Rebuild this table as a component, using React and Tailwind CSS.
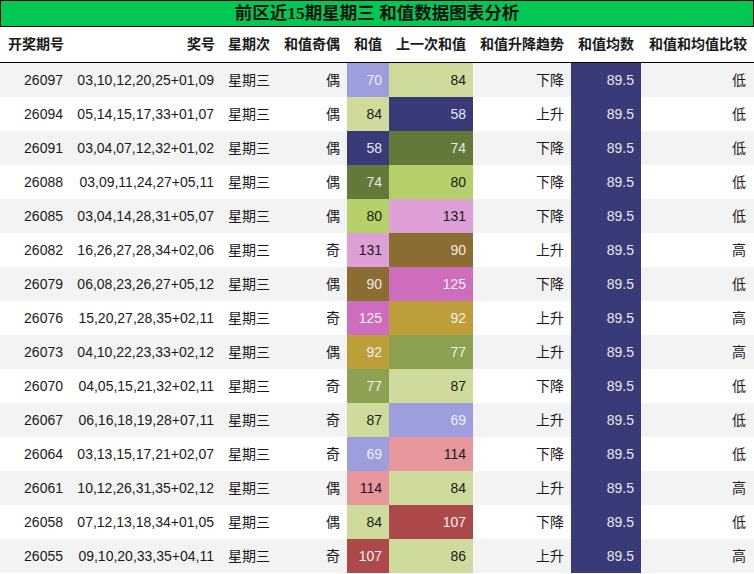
import React from "react";

const rows = [
  ["26097", "03,10,12,20,25+01,09", "偶", 70, 84, "下降", "低"],
  ["26094", "05,14,15,17,33+01,07", "偶", 84, 58, "上升", "低"],
  ["26091", "03,04,07,12,32+01,02", "偶", 58, 74, "下降", "低"],
  ["26088", "03,09,11,24,27+05,11", "偶", 74, 80, "下降", "低"],
  ["26085", "03,04,14,28,31+05,07", "偶", 80, 131, "下降", "低"],
  ["26082", "16,26,27,28,34+02,06", "奇", 131, 90, "上升", "高"],
  ["26079", "06,08,23,26,27+05,12", "偶", 90, 125, "下降", "低"],
  ["26076", "15,20,27,28,35+02,11", "奇", 125, 92, "上升", "高"],
  ["26073", "04,10,22,23,33+02,12", "偶", 92, 77, "上升", "高"],
  ["26070", "04,05,15,21,32+02,11", "奇", 77, 87, "下降", "低"],
  ["26067", "06,16,18,19,28+07,11", "奇", 87, 69, "上升", "低"],
  ["26064", "03,13,15,17,21+02,07", "奇", 69, 114, "下降", "低"],
  ["26061", "10,12,26,31,35+02,12", "偶", 114, 84, "上升", "高"],
  ["26058", "07,12,13,18,34+01,05", "偶", 84, 107, "下降", "低"],
  ["26055", "09,10,20,33,35+04,11", "奇", 107, 86, "上升", "高"],
];

const colorMap = {
  70: ["bg-[#9c9ede]", "text-[#f0f0f0]"],
  84: ["bg-[#cedb9c]", "text-[#1a1a1a]"],
  58: ["bg-[#393b79]", "text-[#e8e8e8]"],
  74: ["bg-[#637939]", "text-[#e8e8e8]"],
  80: ["bg-[#b5cf6b]", "text-[#1a1a1a]"],
  131: ["bg-[#de9ed6]", "text-[#1a1a1a]"],
  90: ["bg-[#8c6d31]", "text-[#e8e8e8]"],
  125: ["bg-[#ce6dbd]", "text-[#f0f0f0]"],
  92: ["bg-[#bd9e39]", "text-[#f0f0f0]"],
  77: ["bg-[#8ca252]", "text-[#f0f0f0]"],
  87: ["bg-[#cedb9c]", "text-[#1a1a1a]"],
  69: ["bg-[#9c9ede]", "text-[#f0f0f0]"],
  114: ["bg-[#e7969c]", "text-[#1a1a1a]"],
  107: ["bg-[#ad494a]", "text-[#f0f0f0]"],
  86: ["bg-[#cedb9c]", "text-[#1a1a1a]"],
};

const grid =
  "grid grid-cols-[71px_151px_55px_70px_42px_84px_98px_70px_113px]";

const headers = [
  "开奖期号",
  "奖号",
  "星期次",
  "和值奇偶",
  "和值",
  "上一次和值",
  "和值升降趋势",
  "和值均数",
  "和值和均值比较",
];

export default function App() {
  return (
    <div
      className="w-[754px] h-[574px] bg-white overflow-hidden text-[14px] text-[#1a1a1a]"
      style={{ fontFamily: '"Liberation Sans", "Noto Sans CJK SC", sans-serif' }}
    >
      <div
        className="h-[27px] bg-[#00c853] border border-black flex items-center justify-center font-bold text-[17.5px] text-[#111]"
        style={{ fontFamily: '"Liberation Serif", "Noto Sans CJK SC", serif' }}
      >
        前区近15期星期三 和值数据图表分析
      </div>
      <div className={`${grid} h-[36px] border-b border-black font-bold`}>
        {headers.map((h, i) => (
          <div
            key={i}
            className={`flex items-center ${i === 0 ? "justify-start pl-[8px]" : "justify-end pr-[7px]"}`}
          >
            {h}
          </div>
        ))}
      </div>
      {rows.map((r, idx) => {
        const [c1, c2] = colorMap[r[3]];
        const [p1, p2] = colorMap[r[4]];
        const bg = idx % 2 === 0 ? "bg-[#f3f3f3]" : "bg-white";
        return (
          <div key={idx} className={`${grid} h-[34px] ${bg}`}>
            <div className="flex items-center justify-end pr-[8px]">{r[0]}</div>
            <div className="flex items-center justify-end pr-[8px]">{r[1]}</div>
            <div className="flex items-center justify-end pr-[7px]">星期三</div>
            <div className="flex items-center justify-end pr-[7px]">{r[2]}</div>
            <div className={`flex items-center justify-end pr-[7px] ${c1} ${c2}`}>{r[3]}</div>
            <div className={`flex items-center justify-end pr-[7px] ${p1} ${p2}`}>{r[4]}</div>
            <div className="flex items-center justify-end pr-[7px]">{r[5]}</div>
            <div className="flex items-center justify-end pr-[7px] bg-[#393b79] text-[#e8e8e8]">89.5</div>
            <div className="flex items-center justify-end pr-[8px]">{r[6]}</div>
          </div>
        );
      })}
    </div>
  );
}
